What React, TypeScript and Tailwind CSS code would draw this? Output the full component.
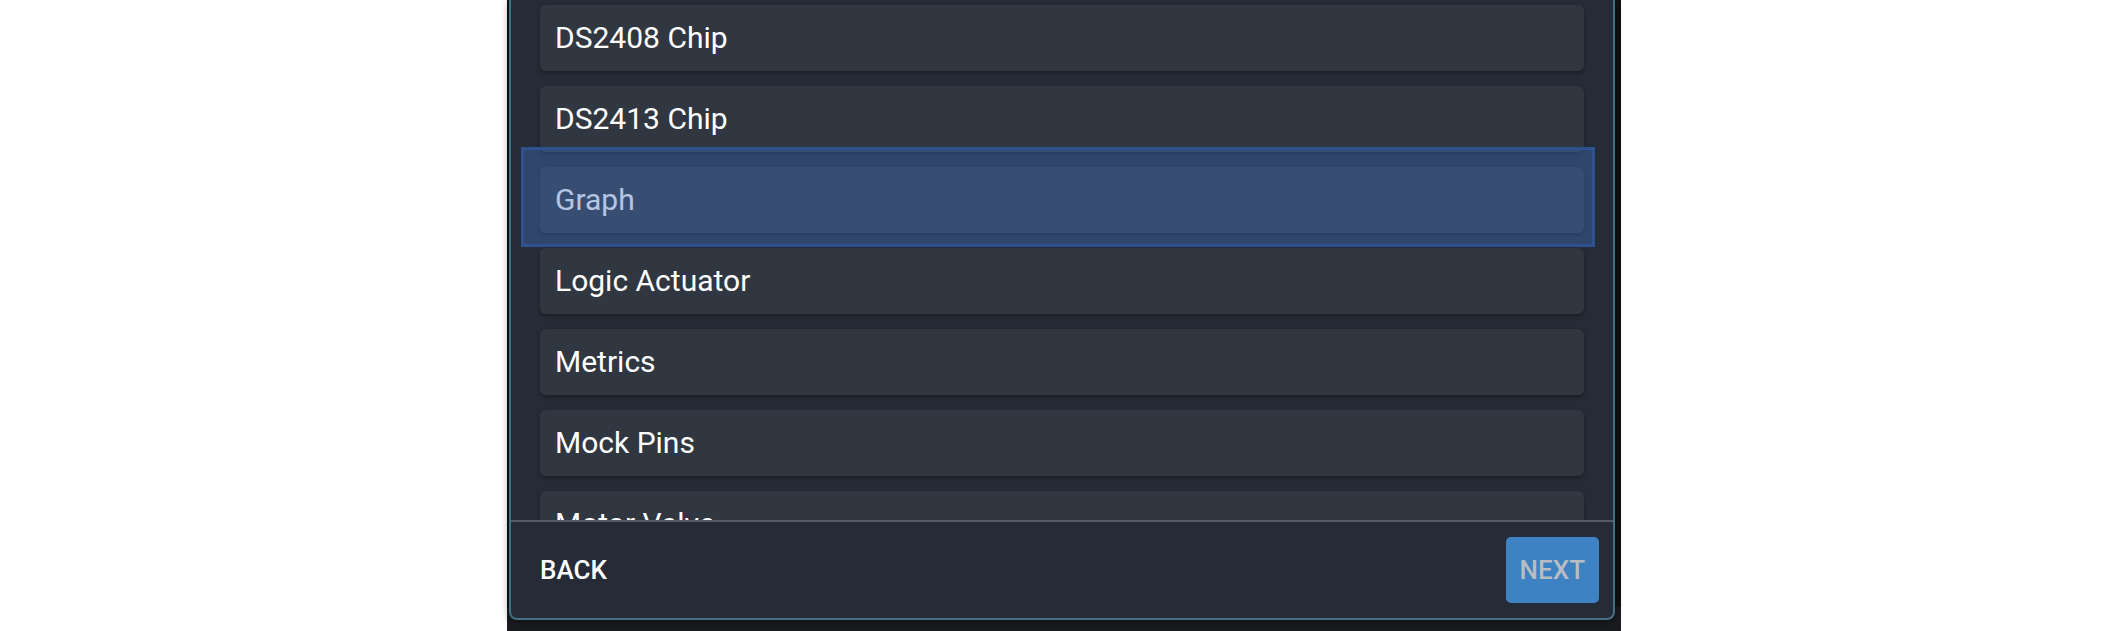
import { useState } from "react";

const widgets = [
  "DS2408 Chip",
  "DS2413 Chip",
  "Graph",
  "Logic Actuator",
  "Metrics",
  "Mock Pins",
  "Motor Valve",
];

function Highlight() {
  return (
    <span className="pointer-events-none absolute -top-5 -right-[11px] -bottom-[14px] -left-[19px] z-10 border-[3px] border-[#2f5190] bg-[#416dbe]/40" />
  );
}

export default function App() {
  const [selected, setSelected] = useState("Graph");

  return (
    <div className="flex justify-center bg-white font-[Roboto,sans-serif]">
      <main className="w-full max-w-[1114px] bg-linear-to-t from-[#1a1b1f] from-[24px] to-[#101113] to-[24px] px-[2px] pr-[6px] pb-[11px]">
        <section className="rounded-b-lg border-2 border-t-0 border-[#447085] bg-[#262c37] shadow-[0_2px_8px_rgba(0,0,0,0.4)]">
          <ul className="flex max-h-[520px] flex-col gap-[15px] overflow-y-auto px-[29px] pt-[5px] [scrollbar-width:none]">
            {widgets.map((name) => (
              <li key={name} className="relative shrink-0">
                <button
                  type="button"
                  onClick={() => setSelected(name)}
                  className="block h-[66px] w-full rounded-md bg-[#313740] px-[15px] text-left text-[30px] leading-9 text-white shadow-[0_2px_4px_rgba(0,0,0,0.35)]"
                >
                  {name}
                </button>
                {selected === name && <Highlight />}
              </li>
            ))}
          </ul>
          <footer className="flex items-center justify-between border-t-2 border-[#565c65] py-[15px] pr-[14px] pl-[29px]">
            <button
              type="button"
              className="h-[66px] text-[26px] leading-8 font-medium text-white"
            >
              BACK
            </button>
            <button
              type="button"
              className="h-[66px] rounded-[5px] bg-[#3d82c2] px-[14px] text-[26px] leading-8 font-medium text-[#b9bcc1]"
            >
              NEXT
            </button>
          </footer>
        </section>
      </main>
    </div>
  );
}
